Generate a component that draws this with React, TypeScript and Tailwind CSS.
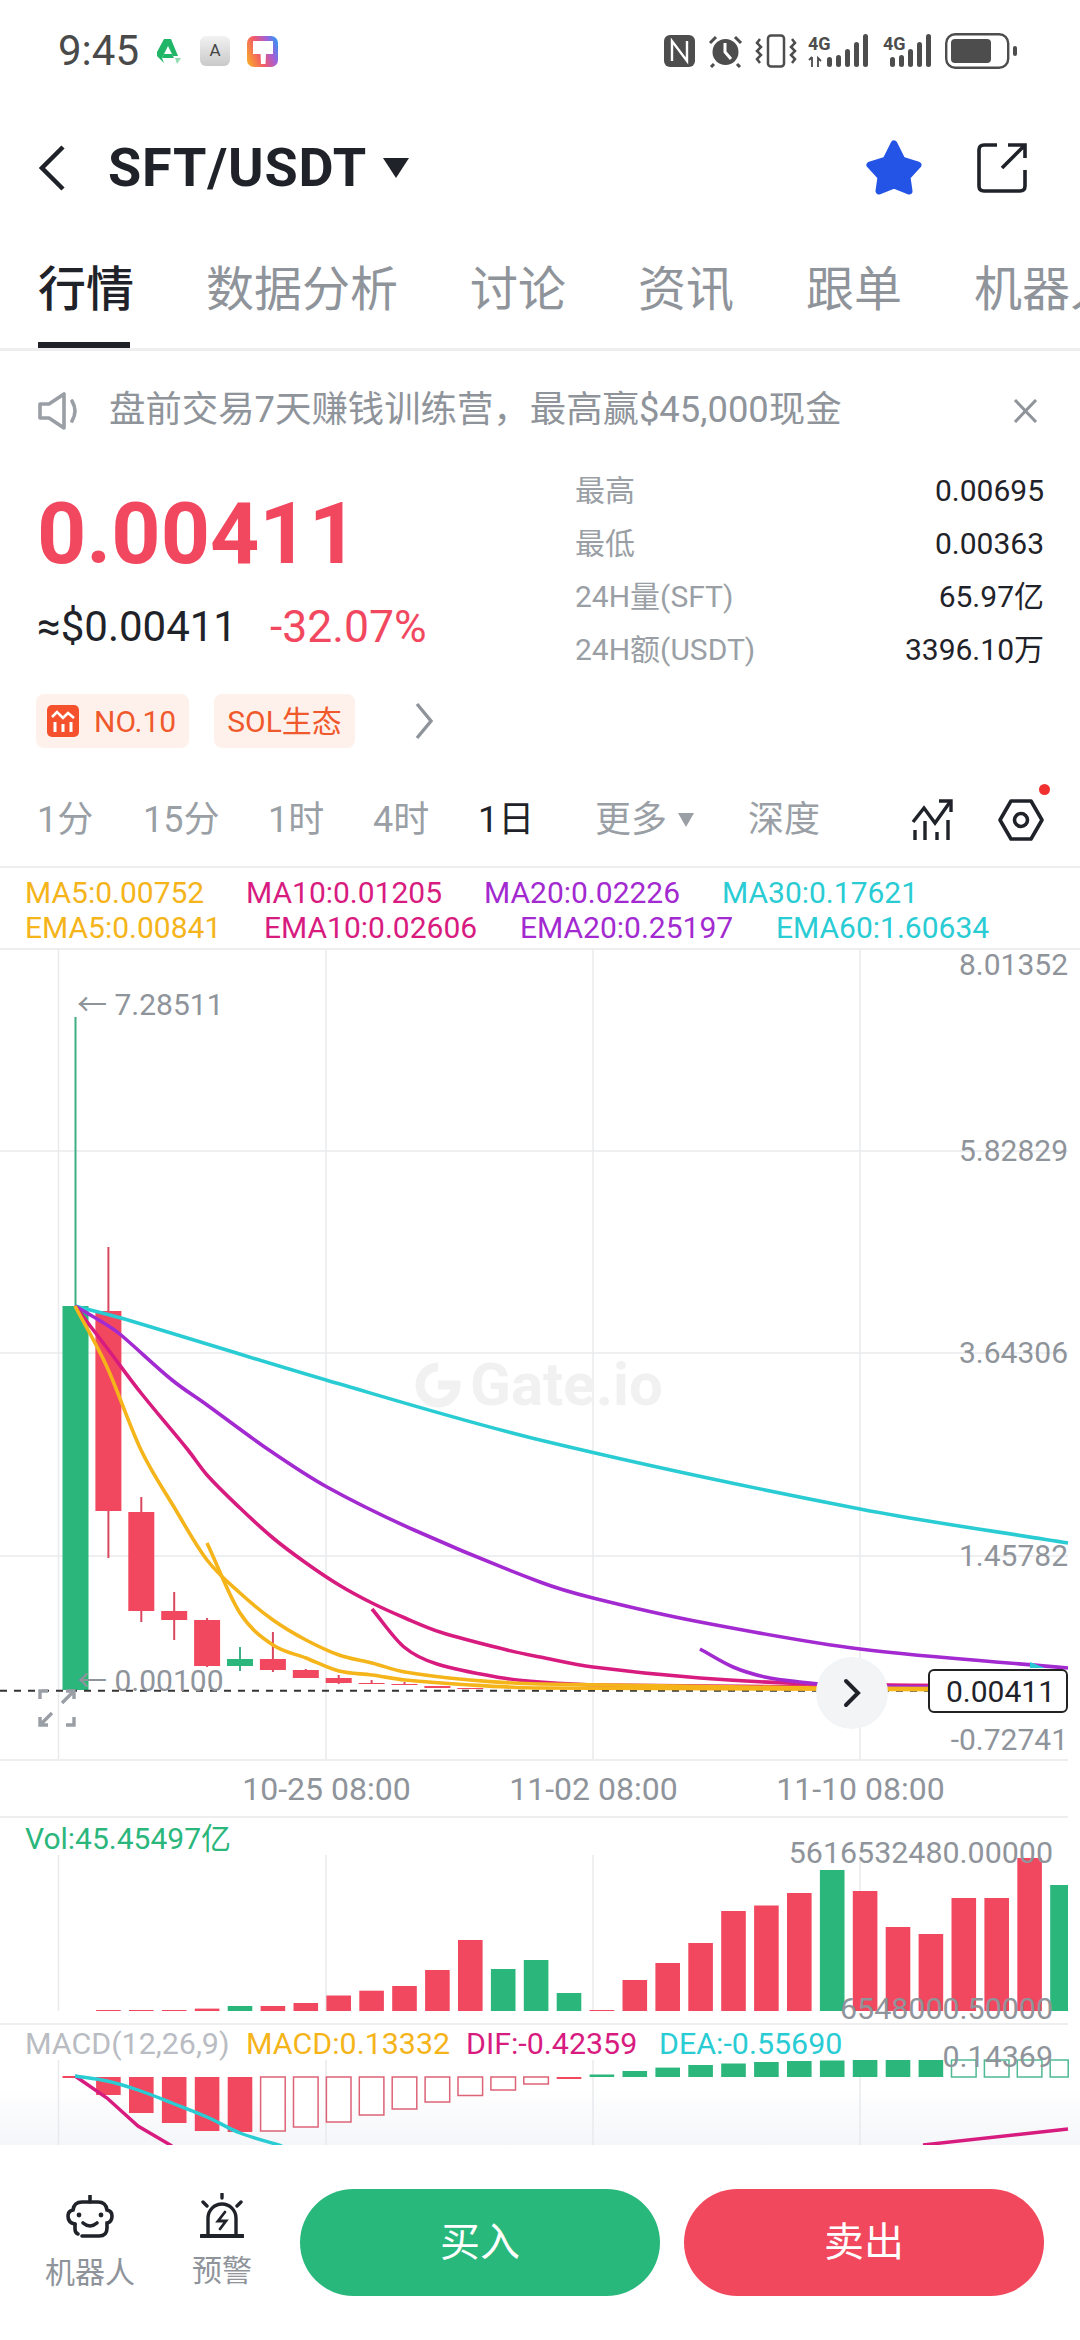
import React from "react";

const X = (i: number) => 75.5 + 32.9 * i;

const RED = "#f2485f";
const GREEN = "#2bb67c";
const GOLD = "#f4b41a";
const PINK = "#d81b7f";
const PURPLE = "#a22ad0";
const TEAL = "#2accd4";
const GRID = "#e9eaec";

// [index, bodyTop, bodyBottom, wickTop, wickBottom, green?]
const candles: [number, number, number, number, number, boolean][] = [
  [0, 1306, 1690, 1017, 1690, true],
  [1, 1311, 1511, 1247, 1558, false],
  [2, 1512, 1611, 1497, 1622, false],
  [3, 1611, 1620, 1592, 1640, false],
  [4, 1620, 1666, 1618, 1667, false],
  [5, 1659, 1666, 1647, 1671, true],
  [6, 1659, 1670, 1632, 1672, false],
  [7, 1670, 1678, 1669, 1678, false],
  [8, 1678, 1683, 1675, 1684, false],
  [9, 1683, 1684, 1680, 1684, false],
  [10, 1684, 1685, 1682, 1685, false],
  [11, 1686, 1688, 1686, 1688, false],
  [12, 1688, 1689, 1688, 1689, false],
];

const lines: [string, number[][]][] = [
  [TEAL, [[75, 1306], [121, 1318], [326, 1380], [540, 1440], [860, 1509], [1068, 1543]]],
  [PURPLE, [[75, 1306], [107, 1325], [121, 1335], [172, 1380], [207, 1405], [269, 1450], [327, 1487], [414, 1530], [540, 1582], [593, 1598], [700, 1622], [860, 1649], [1068, 1668]]],
  [PINK, [[75, 1306], [107, 1348], [141, 1393], [188, 1450], [207, 1475], [240, 1508], [273, 1538], [306, 1563], [339, 1585], [372, 1603], [405, 1618], [440, 1632], [507, 1650], [540, 1657], [593, 1667], [700, 1678], [820, 1684], [1068, 1686]]],
  [PINK, [[372, 1609], [404, 1647], [437, 1664], [503, 1678], [540, 1682], [600, 1685], [820, 1687], [1068, 1687]]],
  [PURPLE, [[700, 1649], [733, 1667], [765, 1677], [800, 1682], [850, 1686], [1068, 1687]]],
  [GOLD, [[75, 1306], [107, 1367], [141, 1450], [174, 1507], [207, 1560], [240, 1593], [273, 1620], [306, 1640], [339, 1655], [372, 1663], [405, 1672], [470, 1680], [540, 1684], [820, 1688], [1068, 1689]]],
  [GOLD, [[207, 1543], [240, 1613], [273, 1645], [306, 1658], [339, 1671], [372, 1675], [405, 1680], [470, 1685], [540, 1688], [1068, 1690]]],
];

// smooth line through the points, x only ever grows
const smooth = (p: number[][]) => {
  const slope = (i: number) => {
    const a = p[Math.max(i - 1, 0)];
    const b = p[Math.min(i + 1, p.length - 1)];
    return (b[1] - a[1]) / (b[0] - a[0]);
  };
  let d = `M${p[0][0]} ${p[0][1]}`;
  for (let i = 0; i < p.length - 1; i++) {
    const dx = (p[i + 1][0] - p[i][0]) / 3;
    d += ` C${p[i][0] + dx} ${p[i][1] + slope(i) * dx} ${p[i + 1][0] - dx} ${p[i + 1][1] - slope(i + 1) * dx} ${p[i + 1][0]} ${p[i + 1][1]}`;
  }
  return d;
};

// [top of bar, green?] by candle index, starting at index 1
const volumes: [number, boolean][] = [
  [2010, false], [2010, false], [2010, false], [2008.6, false], [2006, true], [2006, false], [2003, false],
  [1995.5, false], [1990.7, false], [1986, false], [1970, false], [1940, false], [1969, true], [1960, true],
  [1993, true], [2010, false], [1980, false], [1963, false], [1943, false], [1911, false], [1905.5, false],
  [1893, false], [1870, true], [1891, false], [1927, false], [1934, false], [1898, false], [1898, false],
  [1858, false], [1885, true],
];

const macdDown: [number, boolean][] = [
  [2095, true], [2113, true], [2123, true], [2131, true], [2132, true], [2131, false], [2127, false],
  [2122, false], [2115, false], [2109, false], [2102, false], [2095.5, false], [2090, false], [2084, false],
];
const macdUp = [2074.5, 2071, 2067.6, 2065, 2063.5, 2062, 2061, 2060.5, 2060, 2060, 2060];

const VGrid = ({ y1, y2 }: { y1: number; y2: number }) => (
  <>
    {[58.5, 326, 593, 860].map((x) => (
      <line key={x} x1={x} x2={x} y1={y1} y2={y2} stroke={GRID} strokeWidth="1.5" />
    ))}
  </>
);

const StatusBar = () => (
  <div className="h-[102px] flex items-center justify-between pl-[58px] pr-[63px] text-[#4a4a4a]">
    <div className="flex items-center">
      <span className="text-[42px] leading-none w-[80px] whitespace-nowrap">9:45</span>
      <svg className="ml-[18px]" width="26" height="26" viewBox="0 0 26 26">
        <path d="M8 1 H15 L22 18 H17 L12 8 L6 20 L8 25 L1 18 V14 Z" fill="#21b568" />
        <path d="M8 16 H16 L18 20 H6 Z" fill="#21b568" />
        <path d="M19 20 H25 L21 26 Z" fill="#8fdcb0" />
      </svg>
      <div className="ml-[18px] w-[30px] h-[30px] rounded-[6px] bg-linear-to-b from-[#f2f2f2] to-[#c9c9c9] flex items-center justify-center text-[17px] text-[#444]">
        A
      </div>
      <svg className="ml-[17px]" width="31" height="31" viewBox="0 0 31 31">
        <defs>
          <linearGradient id="brush" x1="0" y1="0.7" x2="1" y2="0.3">
            <stop offset="0" stopColor="#f9a12f" />
            <stop offset="0.4" stopColor="#f2596a" />
            <stop offset="0.75" stopColor="#a45fd8" />
            <stop offset="1" stopColor="#3f8ff0" />
          </linearGradient>
        </defs>
        <rect width="31" height="31" rx="7" fill="url(#brush)" />
        <path d="M6 5 H26 V18 H19 L18.5 28 H14 L13.5 18 H6 Z" fill="#fff" />
      </svg>
    </div>
    <div className="flex items-center">
      <svg width="31" height="32" viewBox="0 0 31 32" fill="#4d4d4d">
        <rect x="0" y="0" width="31" height="32" rx="6" />
        <path d="M8 26 V6 L23 26 V6" stroke="#fff" strokeWidth="2.4" fill="none" />
      </svg>
      <svg className="ml-[13px]" width="35" height="34" viewBox="0 0 35 34">
        <circle cx="17.5" cy="18" r="13" fill="#4d4d4d" />
        <path d="M17 9 V18 L23 25" stroke="#fff" strokeWidth="3" fill="none" />
        <path d="M2 9 L8 3 M33 9 L27 3 M6 30 L3 33 M29 30 L32 33" stroke="#4d4d4d" strokeWidth="3" />
      </svg>
      <svg className="ml-[12px]" width="42" height="34" viewBox="0 0 42 34" fill="none" stroke="#4d4d4d" strokeWidth="2.5">
        <rect x="13" y="1.5" width="16" height="31" rx="3" />
        <path d="M5 5 L2 9 L6 13 L2 17 L6 21 L2 25 L5 29 M37 5 L40 9 L36 13 L40 17 L36 21 L40 25 L37 29" />
      </svg>
      <svg className="ml-[11px]" width="64" height="34" viewBox="0 0 64 34" fill="#4d4d4d">
        <text x="0" y="16" fontSize="18" fontWeight="700">4G</text>
        <path d="M4 23 V33 M10 33 V24 L13 27 M1 26 L4 23" stroke="#4d4d4d" strokeWidth="1.8" fill="none" />
        <rect x="19" y="23" width="5" height="10" rx="2.5" />
        <rect x="28" y="21" width="5" height="12" rx="2.5" />
        <rect x="37" y="15" width="5" height="18" rx="2.5" />
        <rect x="46" y="8" width="5" height="25" rx="2.5" />
        <rect x="55" y="0" width="5" height="33" rx="2.5" />
      </svg>
      <svg className="ml-[11px]" width="50" height="34" viewBox="0 0 50 34" fill="#4d4d4d">
        <text x="0" y="16" fontSize="18" fontWeight="700">4G</text>
        <rect x="7" y="23" width="5" height="10" rx="2.5" />
        <rect x="16" y="21" width="5" height="12" rx="2.5" />
        <rect x="25" y="15" width="5" height="18" rx="2.5" />
        <rect x="34" y="8" width="5" height="25" rx="2.5" />
        <rect x="43" y="0" width="5" height="33" rx="2.5" />
      </svg>
      <svg className="ml-[12px]" width="72" height="36" viewBox="0 0 72 36" fill="#4d4d4d">
        <rect x="1.2" y="1.2" width="62" height="33.6" rx="9" fill="none" stroke="#4d4d4d" strokeWidth="2.4" />
        <rect x="6" y="6" width="40" height="24" rx="4" />
        <rect x="68" y="13" width="4" height="10" rx="2" />
      </svg>
    </div>
  </div>
);

const Header = () => (
  <div className="h-[132px] flex items-center pl-[39px] pr-[53px] text-[#1f2329]">
    <svg width="26" height="46" viewBox="0 0 26 46" fill="none" stroke="#1f2329" strokeWidth="4.5">
      <path d="M24 2 L3 23 L24 44" />
    </svg>
    <span className="ml-[43px] text-[54px] font-bold leading-none tracking-[0.8px]">SFT/USDT</span>
    <svg className="ml-[16px]" width="26" height="20" viewBox="0 0 26 20">
      <path d="M0 0 H26 L13 20 Z" fill="#1f2329" />
    </svg>
    <svg className="ml-auto" width="58" height="56" viewBox="0 0 58 56">
      <path d="M29 4 L37 20 L53 25 L42 37 L44 51 L29 45 L14 51 L16 37 L5 25 L21 20 Z" fill="#2354e6" stroke="#2354e6" strokeWidth="7" strokeLinejoin="round" />
    </svg>
    <svg className="ml-[54px]" width="50" height="50" viewBox="0 0 50 50" fill="none" stroke="#1f2329" strokeWidth="3.6">
      <path d="M20 2 H7 Q2 2 2 7 V43 Q2 48 7 48 H43 Q48 48 48 43 V27" />
      <path d="M25 25 L47 3 M31 2 H48 V15" />
    </svg>
  </div>
);

const Tabs = () => {
  const tabs = ["行情", "数据分析", "讨论", "资讯", "跟单", "机器人"];
  return (
    <div className="h-[117px] border-b-[3px] border-[#eeeeee] flex pl-[38px] pt-[32px] gap-[72px] overflow-hidden text-[48px] leading-[48px] whitespace-nowrap">
      {tabs.map((t, i) => (
        <div key={t} className="flex flex-col shrink-0">
          <span className={i === 0 ? "text-[#1f2329] font-medium" : "text-[#8f949b]"}>{t}</span>
          {i === 0 && <div className="mt-[28px] h-[6px] w-[92px] bg-[#1f2329]" />}
        </div>
      ))}
    </div>
  );
};

const Notice = () => (
  <div className="h-[113px] pt-[6px] flex items-center pl-[38px] pr-[42px] text-[#8f949b]">
    <svg width="42" height="38" viewBox="0 0 42 38" fill="none" stroke="#9a9fa6" strokeWidth="3.6">
      <path d="M2 12 H11 L26 2 V36 L11 26 H2 Z" strokeLinejoin="round" />
      <path d="M34 9 Q40 19 34 29" strokeLinecap="round" />
    </svg>
    <span className="ml-[29px] text-[36.4px] leading-none whitespace-nowrap">盘前交易7天赚钱训练营，最高赢$45,000现金</span>
    <svg className="ml-auto" width="25" height="24" viewBox="0 0 25 24" fill="none" stroke="#8f949b" strokeWidth="3">
      <path d="M2 1 L23 23 M23 1 L2 23" />
    </svg>
  </div>
);

const stats = [
  ["最高", "0.00695"],
  ["最低", "0.00363"],
  ["24H量(SFT)", "65.97亿"],
  ["24H额(USDT)", "3396.10万"],
];

const Price = () => (
  <div className="h-[230px] flex pl-[37px] pr-[36px]">
    <div className="w-[538px] pt-[25px]">
      <div className="h-[90px] flex items-center text-[86px] font-bold leading-none text-[#f2485f]">0.00411</div>
      <div className="mt-[28px] h-[40px] flex items-center leading-none whitespace-nowrap">
        <span className="text-[42px] text-[#1f2329]">≈$0.00411</span>
        <span className="ml-[33px] text-[44.5px] text-[#f2485f]">-32.07%</span>
      </div>
    </div>
    <div className="flex-1 text-[30px]">
      {stats.map(([k, v]) => (
        <div key={k} className="h-[53px] flex items-center justify-between">
          <span className="text-[#9a9fa6]">{k}</span>
          <span className="text-[#1f2329]">{v}</span>
        </div>
      ))}
    </div>
  </div>
);

const Tags = () => (
  <div className="h-[54px] flex items-center pl-[36px] text-[30px] text-[#f0592c]">
    <div className="h-full w-[153px] rounded-[8px] bg-[#fef1ec] flex items-center pl-[11px] gap-[15px]">
      <svg width="32" height="32" viewBox="0 0 32 32">
        <rect width="32" height="32" rx="5" fill="#f4512c" />
        <path d="M5 12 L10 7 L16 13 L21 8 L27 13" fill="none" stroke="#fff" strokeWidth="2.6" />
        <path d="M8 27 V17 M16 27 V19 M24 27 V17" stroke="#fff" strokeWidth="3" />
      </svg>
      <span>NO.10</span>
    </div>
    <div className="ml-[25px] h-full w-[141px] rounded-[8px] bg-[#fef1ec] flex items-center justify-center">SOL生态</div>
    <svg className="ml-[60px]" width="18" height="38" viewBox="0 0 18 38" fill="none" stroke="#8f949b" strokeWidth="3.4">
      <path d="M2 2 L16 19 L2 36" />
    </svg>
  </div>
);

const Intervals = () => (
  <div className="relative h-[120px] border-b-2 border-[#eeeeee] pt-[26px] flex items-center pl-[37px] text-[36px] text-[#9a9fa6] whitespace-nowrap">
    <span className="w-[106px]">1分</span>
    <span className="w-[125px]">15分</span>
    <span className="w-[105px]">1时</span>
    <span className="w-[105px]">4时</span>
    <span className="w-[117px] text-[#1f2329]">1日</span>
    <span>更多</span>
    <svg className="ml-[11px]" width="16" height="14" viewBox="0 0 16 14">
      <path d="M0 0 H16 L8 14 Z" fill="#9a9fa6" />
    </svg>
    <span className="ml-[54px]">深度</span>
    <svg className="ml-[91px]" width="42" height="42" viewBox="0 0 42 42" fill="none" stroke="#1f2329" strokeWidth="3.4">
      <path d="M2 23 L13 9 L24 24 L39 3" />
      <path d="M28 2 H40 V13" />
      <path d="M4 31 V41 M14 22 V41 M26 33 V41 M37 21 V41" />
    </svg>
    <svg className="ml-[45px]" width="46" height="42" viewBox="0 0 46 42" fill="none" stroke="#1f2329" strokeWidth="3.6">
      <path d="M13 2 H33 L44 21 L33 40 H13 L2 21 Z" strokeLinejoin="round" />
      <circle cx="23" cy="21" r="6.5" />
    </svg>
    <div className="absolute left-[1039px] top-[36px] w-[11px] h-[11px] rounded-full bg-[#f0312f]" />
  </div>
);

const Legend = () => (
  <div className="h-[82px] border-b-2 border-[#eeeeee] pt-[7px] text-[30px] leading-[35px] whitespace-nowrap">
    <div className="flex pl-[25px]">
      <span className="w-[221px] text-[#f4b41a]">MA5:0.00752</span>
      <span className="w-[238px] text-[#d81b7f]">MA10:0.01205</span>
      <span className="w-[238px] text-[#a22ad0]">MA20:0.02226</span>
      <span className="text-[#2accd4]">MA30:0.17621</span>
    </div>
    <div className="flex pl-[25px]">
      <span className="w-[239px] text-[#f4b41a]">EMA5:0.00841</span>
      <span className="w-[256px] text-[#d81b7f]">EMA10:0.02606</span>
      <span className="w-[256px] text-[#a22ad0]">EMA20:0.25197</span>
      <span className="text-[#2accd4]">EMA60:1.60634</span>
    </div>
  </div>
);

const axis = [
  ["8.01352", -3],
  ["5.82829", 183],
  ["3.64306", 385],
  ["1.45782", 588],
  ["-0.72741", 772],
] as const;

const MainChart = () => (
  <div className="relative h-[809px] w-[1080px]">
    <svg className="absolute inset-0" width="1080" height="809" viewBox="0 950 1080 809">
      <VGrid y1={950} y2={1759} />
      {[1151, 1353, 1556].map((y) => (
        <line key={y} x1={0} x2={1068} y1={y} y2={y} stroke={GRID} strokeWidth="1.5" />
      ))}
      {candles.map(([i, top, bottom, wickTop, wickBottom, green]) => (
        <g key={i}>
          <line x1={X(i)} x2={X(i)} y1={wickTop} y2={wickBottom} stroke={green ? "#3fae85" : "#d9485f"} strokeWidth="2" />
          <rect x={X(i) - 13} y={top} width="26" height={bottom - top} fill={green ? GREEN : RED} />
        </g>
      ))}
      <line x1={0} x2={930} y1={1690.7} y2={1690.7} stroke="#333" strokeWidth="2" strokeDasharray="7 7" />
      {lines.map(([color, pts], i) => (
        <path key={i} d={smooth(pts)} fill="none" stroke={color} strokeWidth="3.6" strokeLinejoin="round" />
      ))}
      <path d="M1030 1662 L1045 1668 H1030 Z" fill={TEAL} />
    </svg>

    <div className="absolute left-[415px] top-[405px] flex items-center gap-[9px] text-[#f1f1f1]">
      <svg width="46" height="46" viewBox="0 0 46 46" fill="none" stroke="#f1f1f1" strokeWidth="9">
        <path d="M23 5 A18 18 0 1 0 41 23 H23" />
      </svg>
      <span className="text-[60px] font-bold leading-none">Gate.io</span>
    </div>

    {axis.map(([label, top]) => (
      <span key={label} className="absolute right-[12px] text-[30px] leading-[36px] text-[#8f949b]" style={{ top }}>
        {label}
      </span>
    ))}

    <span className="absolute left-[77px] top-[37px] text-[30px] leading-[36px] text-[#8f949b] whitespace-nowrap">← 7.28511</span>
    <span className="absolute left-[77px] top-[713px] text-[30px] leading-[36px] text-[#8f949b] whitespace-nowrap">← 0.00100</span>

    <svg className="absolute left-[38px] top-[739px]" width="38" height="38" viewBox="0 0 38 38" fill="none" stroke="#9a9fa6" strokeWidth="3.4">
      <path d="M10 2 H2 V10 M28 36 H36 V28 M2 28 V36 H10 M2 36 L14 24 M36 10 V2 H28 M36 2 L24 14" />
    </svg>

    <div className="absolute left-[816px] top-[707px] w-[72px] h-[72px] rounded-full bg-[#f2f4f6] flex items-center justify-center">
      <svg width="18" height="30" viewBox="0 0 18 30" fill="none" stroke="#1f2329" strokeWidth="4" strokeLinecap="round">
        <path d="M3 3 L15 15 L3 27" />
      </svg>
    </div>

    <div className="absolute left-[928px] top-[719px] w-[140px] h-[44px] rounded-[6px] border-2 border-[#222] bg-white flex items-center justify-end pr-[11px] text-[30px] text-[#1f2329]">
      0.00411
    </div>
  </div>
);

const XAxis = () => (
  <div className="h-[59px] w-[1068px] border-y-2 border-[#eeeeee] flex items-center pl-[193px] text-[32px] text-[#8f949b]">
    <span className="w-[267px] text-center">10-25 08:00</span>
    <span className="w-[267px] text-center">11-02 08:00</span>
    <span className="w-[267px] text-center">11-10 08:00</span>
  </div>
);

const VolumePanel = () => (
  <div className="relative z-10 h-[205px] w-[1080px]">
    <svg className="absolute inset-0" width="1080" height="205" viewBox="0 1818 1080 205">
      <VGrid y1={1855} y2={2011} />
      {volumes.map(([top, green], i) => (
        <rect key={i} x={X(i + 1) - 12.3} y={top} width={Math.min(24.6, 1068 - (X(i + 1) - 12.3))} height={2011 - top} fill={green ? GREEN : RED} />
      ))}
    </svg>
    <div className="relative pl-[25px] pt-[3px] text-[30px] leading-[36px] text-[#2bb67c]">Vol:45.45497亿</div>
    <span className="absolute right-[27px] top-[17px] text-[30.4px] leading-[36px] text-[#8f949b]">5616532480.00000</span>
    <span className="absolute right-[27px] top-[173px] text-[30.4px] leading-[36px] text-[#8f949b]">6548000.50000</span>
  </div>
);

const MacdPanel = () => (
  <div className="relative h-[122px] w-[1080px] overflow-hidden">
    <div className="absolute left-0 top-0 w-[1068px] h-[2px] bg-[#eeeeee]" />
    <div className="absolute left-0 bottom-0 w-[1080px] h-[60px] bg-linear-to-b from-white/0 to-[#f5f6f9]" />
    <svg className="absolute inset-0" width="1080" height="122" viewBox="0 2023 1080 122">
      <VGrid y1={2060} y2={2145} />
      <line x1={X(0) - 13} x2={X(0) + 13} y1={2077} y2={2077} stroke={RED} strokeWidth="2" />
      {macdDown.map(([bottom, filled], i) => (
        <rect
          key={i}
          x={X(i + 1) - 12.3}
          y={2077}
          width="24.6"
          height={bottom - 2077}
          fill={filled ? RED : "#fff"}
          stroke={filled ? "none" : "#dd6377"}
          strokeWidth="1.5"
        />
      ))}
      <rect x={X(15) - 12.3} y={2077} width="24.6" height="2" fill={RED} />
      {macdUp.map((top, i) => (
        <rect key={i} x={X(i + 16) - 12.3} y={top} width="24.6" height={2077 - top} fill={GREEN} />
      ))}
      {[27, 28, 29, 30].map((i) => (
        <rect key={i} x={X(i) - 12.3} y={2060} width={i === 30 ? 18 : 24.6} height="17" fill="none" stroke="#4fb993" strokeWidth="1.5" />
      ))}
      <polyline points="75,2076 107,2098 138,2126 172,2146" fill="none" stroke={PINK} strokeWidth="3.4" />
      <path d={smooth([[75, 2076], [107, 2081], [138, 2090], [172, 2103], [207, 2117], [240, 2133], [282, 2146]])} fill="none" stroke={TEAL} strokeWidth="3.4" />
      <polyline points="923,2145 1068,2129" fill="none" stroke={PINK} strokeWidth="3.4" />
    </svg>
    <div className="relative flex pl-[25px] pt-[3px] text-[30.4px] leading-[36px] whitespace-nowrap">
      <span className="w-[221px] text-[#b9bcc2]">MACD(12,26,9)</span>
      <span className="w-[220px] text-[#f4b41a]">MACD:0.13332</span>
      <span className="w-[193px] text-[#d81b7f]">DIF:-0.42359</span>
      <span className="text-[#2accd4]">DEA:-0.55690</span>
    </div>
    <span className="absolute right-[27px] top-[16px] text-[30.4px] leading-[36px] text-[#8f949b]">0.14369</span>
  </div>
);

const BottomBar = () => (
  <div className="h-[195px] flex items-start pt-[44px] bg-white">
    <div className="ml-[45px] w-[90px] flex flex-col items-center">
      <svg className="mt-[6px]" width="48" height="44" viewBox="0 0 48 44" fill="none" stroke="#1f2329" strokeWidth="3.6" strokeLinecap="round">
        <path d="M24 1 V7" />
        <path d="M9 29 Q2 28 2 21 Q2 16 7 15 Q8 7 16 7 H32 Q40 7 41 15 Q46 16 46 21 Q46 27 41 28 V33 Q41 41 33 41 H16" />
        <path d="M9 29 V34 Q9 38 12 39" />
        <path d="M17 28 Q24 34 31 28" />
        <circle cx="13" cy="20" r="2.4" fill="#1f2329" stroke="none" />
        <circle cx="35" cy="20" r="2.4" fill="#1f2329" stroke="none" />
      </svg>
      <span className="mt-[14px] text-[30px] leading-[40px] text-[#8f949b]">机器人</span>
    </div>
    <div className="ml-[57px] w-[60px] flex flex-col items-center">
      <svg className="mt-[4px]" width="44" height="46" viewBox="0 0 44 46" fill="none" stroke="#1f2329" strokeWidth="3.4" strokeLinecap="round">
        <path d="M22 1 V5 M3 9 L7 13 M41 9 L37 13" />
        <path d="M8 42 V25 A14 14 0 0 1 36 25 V42" />
        <path d="M1 43 H43" strokeWidth="4" />
        <path d="M25 19 L18 28 H26 L20 36" strokeWidth="2.8" />
      </svg>
      <span className="mt-[12px] text-[30px] leading-[40px] text-[#8f949b]">预警</span>
    </div>
    <button className="ml-[48px] w-[360px] h-[107px] rounded-full bg-[#29b87c] text-white text-[40px]">买入</button>
    <button className="ml-[24px] w-[360px] h-[107px] rounded-full bg-[#f1485e] text-white text-[40px]">卖出</button>
  </div>
);

export default function App() {
  return (
    <div className="w-[1080px] h-[2340px] overflow-hidden bg-white font-[Roboto,'Noto_Sans_CJK_SC',sans-serif]">
      <StatusBar />
      <Header />
      <Tabs />
      <Notice />
      <Price />
      <Tags />
      <Intervals />
      <Legend />
      <MainChart />
      <XAxis />
      <VolumePanel />
      <MacdPanel />
      <BottomBar />
    </div>
  );
}
